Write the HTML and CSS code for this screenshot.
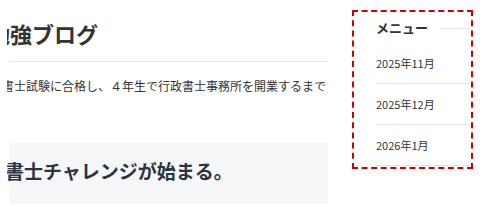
FILE: index.html
```html
<!DOCTYPE html>
<html lang="ja">
<head>
    <meta charset="UTF-8">
    <meta name="viewport" content="width=device-width, initial-scale=1.0">
    <title>勉強ブログ</title>
    <link rel="stylesheet" href="styles.css">
</head>
<body>

    <div class="page">
        <!-- メインカラム -->
        <div class="main">
            <h1 class="site-title">勉強ブログ</h1>
            <hr class="divider">
            <p class="lead">書士試験に合格し、４年生で行政書士事務所を開業するまで</p>

            <div class="post-box">
                <h2 class="post-title">書士チャレンジが始まる。</h2>
            </div>
        </div>

        <!-- サイドメニュー -->
        <div class="sidebar">
            <h3 class="menu-title">メニュー</h3>
            <ul class="menu-list">
                <li><a href="#">2025年11月</a></li>
                <li><a href="#">2025年12月</a></li>
                <li><a href="#">2026年1月</a></li>
            </ul>
        </div>
    </div>

</body>
</html>
```

FILE: styles.css
```css
/* ページ全体 */
body {
    margin: 0;
    font-family: "Noto Sans CJK JP", "Noto Sans", sans-serif;
    background-color: #fff;
    color: #333;
}

.page {
    display: flex;
    align-items: flex-start;
    gap: 24px;
    padding: 10px 11px 0 7px;
}

/* メインカラム */
.main {
    width: 321px;
    flex-shrink: 0;
    overflow: hidden;
    padding-top: 8px;
}

.site-title {
    margin: 0 0 13px -19px;
    font-size: 22px;
    line-height: 30px;
    font-weight: bold;
    color: #333;
    white-space: nowrap;
}

.divider {
    margin: 0 0 0 3px;
    border: none;
    border-top: 1px solid #e6e6e6;
}

.lead {
    margin: 14px 0 47px -5px;
    font-size: 12px;
    line-height: 20px;
    color: #333;
    white-space: nowrap;
}

.post-box {
    margin-left: 3px;
    background-color: #f5f7f9;
    padding: 14px 0 19px;
}

.post-title {
    margin: 0 0 0 -5px;
    font-size: 19px;
    line-height: 28px;
    font-weight: bold;
    color: #2b3440;
    white-space: nowrap;
}

/* サイドメニュー */
.sidebar {
    width: 121px;
    box-sizing: border-box;
    border: 2px dashed #cc0000;
    padding: 6px 1px 1px 22px;
}

.menu-title {
    display: flex;
    align-items: center;
    gap: 12px;
    margin: 0 0 5px;
    font-size: 13px;
    line-height: 20px;
    font-weight: bold;
    color: #333;
}

.menu-title::after {
    content: "";
    flex: 1;
    border-top: 1px solid #e6e6e6;
}

.menu-list {
    list-style: none;
    margin: 0;
    padding: 0;
}

.menu-list li {
    border-bottom: 1px solid #e6e6e6;
}

.menu-list a {
    display: block;
    font-size: 11px;
    line-height: 40px;
    color: #333;
    text-decoration: none;
}
```
